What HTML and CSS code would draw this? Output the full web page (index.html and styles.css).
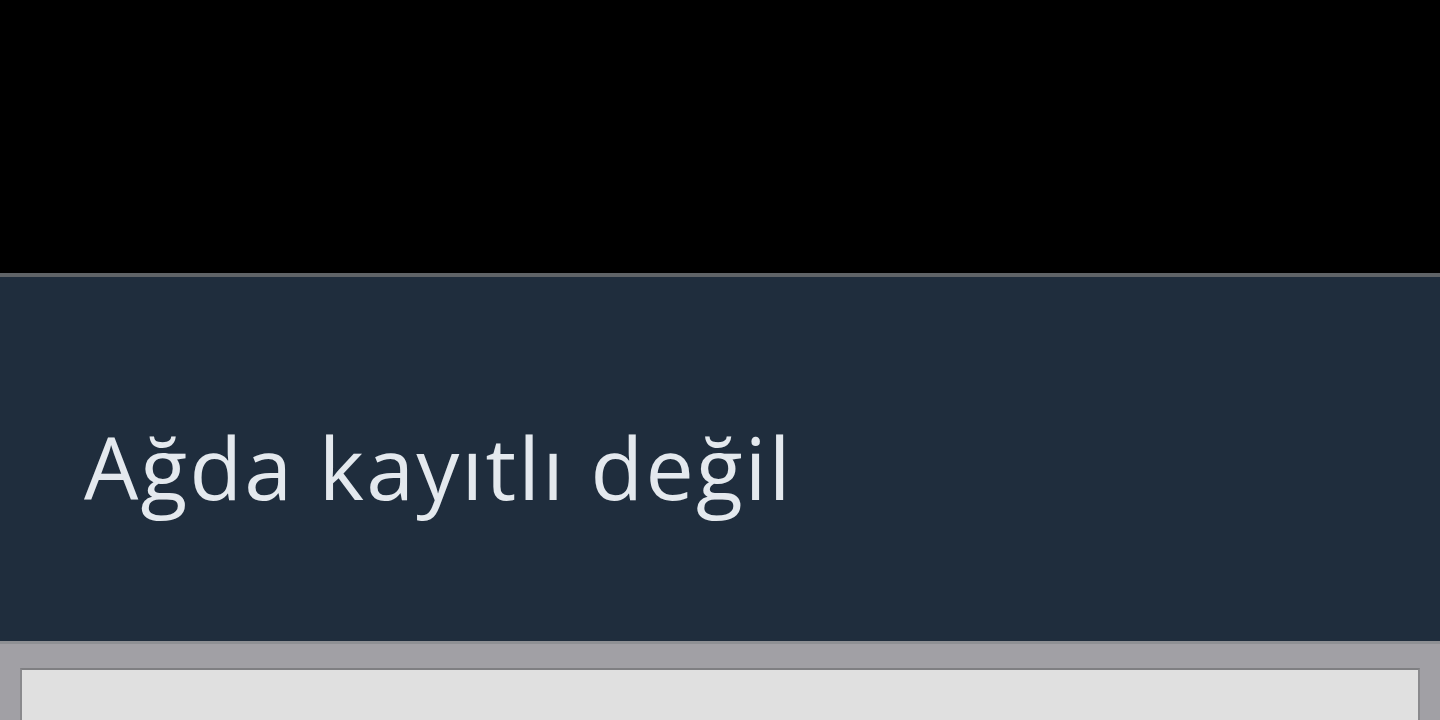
FILE: index.html
```html
<!DOCTYPE html>
<html lang="tr">
<head>
<meta charset="utf-8">
<link rel="stylesheet" href="styles.css">
</head>
<body>
<div class="top"></div>
<div class="dialog">
  <div class="title">Ağda kayıtlı değil</div>
</div>
<div class="body">
  <div class="field"></div>
</div>
</body>
</html>
```
FILE: styles.css
```css
html, body { margin: 0; padding: 0; }
body { width: 1440px; height: 720px; overflow: hidden; background: #000; font-family: "Open Sans", Roboto, sans-serif; }
.top { height: 273px; background: #000; }
.dialog {
  height: 364px;
  background: #1f2d3d;
  border-top: 4px solid #5f6367;
  display: flex;
  align-items: center;
  padding-left: 84px;
}
.title {
  color: #e4e9ee;
  font-size: 86px;
  line-height: 1;
  margin-top: 16px;
  letter-spacing: 2.2px;
}
.body {
  background: #a1a0a5;
  border-top: 3px solid #8e9094;
  padding: 24px 20px 0 20px;
  height: 56px;
}
.field {
  height: 54px;
  background: #e0e0e0;
  border-top: 2px solid #7f7f82;
  border-left: 2px solid #8a8a8d;
  border-right: 2px solid #8a8a8d;
}
```
